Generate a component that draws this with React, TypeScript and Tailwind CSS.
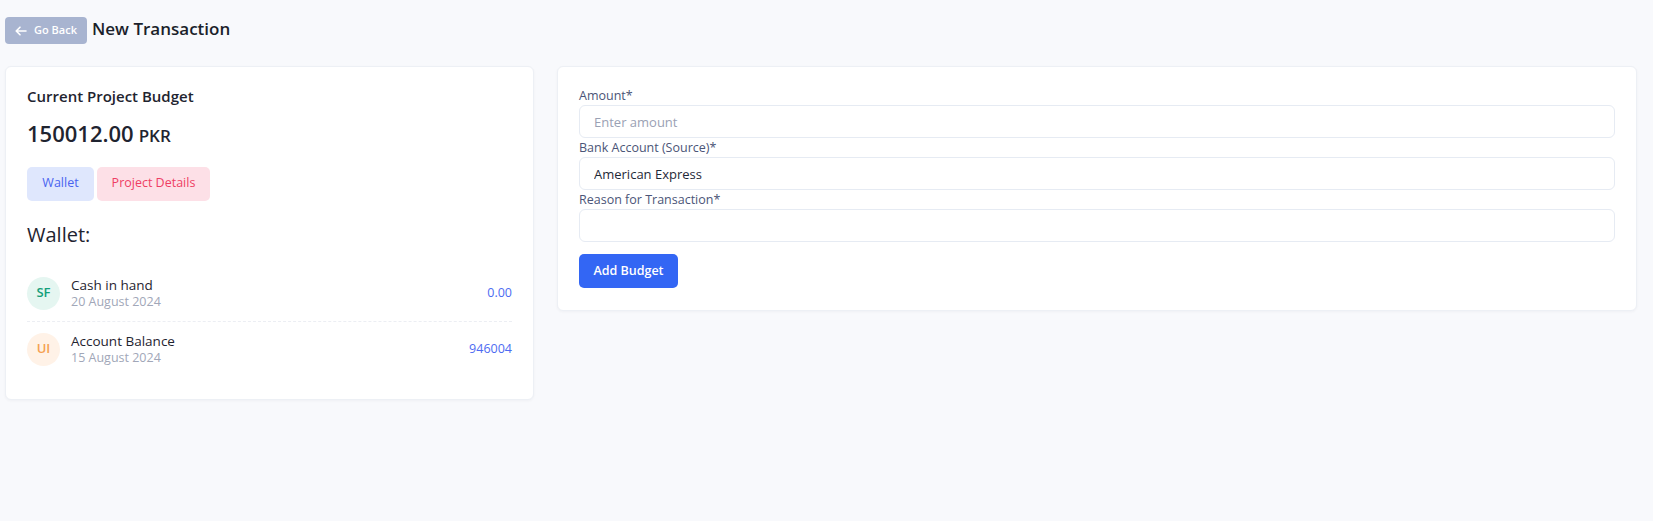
import React from "react";

const font = { fontFamily: '"Open Sans", "Noto Sans", sans-serif' };

function Field({ label, placeholder, value }: { label: string; placeholder?: string; value?: string }) {
  return (
    <div className="flex flex-col">
      <label className="text-[12.5px] leading-[19px] text-[#4b5577]">{label}</label>
      <input
        className="h-[33px] w-full rounded-[6px] border border-[#e6ebf3] bg-white px-[14px] text-[13px] text-[#1f2937] placeholder:text-[#9aa1b4] outline-none"
        placeholder={placeholder}
        defaultValue={value}
      />
    </div>
  );
}

function Row({ initials, bg, color, title, date, amount, divider }: { initials: string; bg: string; color: string; title: string; date: string; amount: string; divider?: boolean }) {
  return (
    <div className={`flex items-center py-[11px] ${divider ? "border-b border-dashed border-[#eceef3]" : ""}`}>
      <div className={`flex h-[33px] w-[33px] items-center justify-center rounded-full text-[13px] font-semibold ${bg} ${color}`}>{initials}</div>
      <div className="ml-[11px] flex flex-col">
        <span className="text-[13.5px] leading-[16px] text-[#1f2430]">{title}</span>
        <span className="text-[12.5px] leading-[17px] text-[#a1a7b8]">{date}</span>
      </div>
      <span className="ml-auto text-[12.5px] text-[#4d6bf2]">{amount}</span>
    </div>
  );
}

export default function App() {
  return (
    <div className="min-h-[521px] w-full bg-[#f8f9fc]" style={font}>
      <div className="flex items-center gap-[5px] pl-[5px] pt-[17px]">
        <button className="flex h-[27px] w-[82px] items-center justify-center gap-[7px] rounded-[4px] bg-[#a8b4d0] text-[11px] font-semibold text-white">
          <svg width="12" height="10" viewBox="0 0 12 10" fill="none" stroke="white" strokeWidth="1.6" strokeLinecap="round" strokeLinejoin="round">
            <path d="M11 5H1.5M5 1.2 1.2 5 5 8.8" />
          </svg>
          Go Back
        </button>
        <h1 className="-mt-[3px] text-[17px] font-semibold leading-[24px] text-[#1b1f2b]">New Transaction</h1>
      </div>

      <div className="mt-[22px] flex items-start gap-[23px] pl-[5px]">
        <div className="w-[529px] shrink-0 rounded-[6px] border border-[#edf0f5] bg-white px-[21px] pb-[22px] pt-[17px] shadow-[0_1px_3px_rgba(20,30,60,0.04)]">
          <div className="text-[15px] font-semibold leading-[24px] text-[#1f2430]">Current Project Budget</div>
          <div className="mt-[10px] flex items-baseline gap-[5px] text-[#1f2430]">
            <span className="text-[22px] font-semibold leading-[30px]">150012.00</span>
            <span className="text-[17px] font-semibold">PKR</span>
          </div>
          <div className="mt-[18px] flex gap-[3px]">
            <button className="h-[34px] w-[67px] rounded-[5px] bg-[#dfe7fd] text-[12.5px] text-[#4a64f0]">Wallet</button>
            <button className="h-[34px] w-[113px] rounded-[5px] bg-[#fde0e7] text-[12.5px] text-[#ef3e64]">Project Details</button>
          </div>
          <div className="mt-[20px] text-[20px] font-medium leading-[28px] text-[#1f2430]">Wallet:</div>
          <div className="mt-[17px] flex flex-col">
            <Row initials="SF" bg="bg-[#e5f6f1]" color="text-[#14a07a]" title="Cash in hand" date="20 August 2024" amount="0.00" divider />
            <Row initials="UI" bg="bg-[#fff2e7]" color="text-[#f5a151]" title="Account Balance" date="15 August 2024" amount="946004" />
          </div>
        </div>

        <div className="flex w-[1080px] shrink-0 flex-col rounded-[6px] border border-[#edf0f5] bg-white px-[21px] pb-[22px] pt-[19px] shadow-[0_1px_3px_rgba(20,30,60,0.04)]">
          <Field label="Amount*" placeholder="Enter amount" />
          <Field label="Bank Account (Source)*" value="American Express" />
          <Field label="Reason for Transaction*" />
          <div className="mt-[12px]">
            <button className="h-[34px] w-[99px] rounded-[5px] bg-[#3366f4] text-[12.5px] font-semibold text-white">Add Budget</button>
          </div>
        </div>
      </div>
    </div>
  );
}
